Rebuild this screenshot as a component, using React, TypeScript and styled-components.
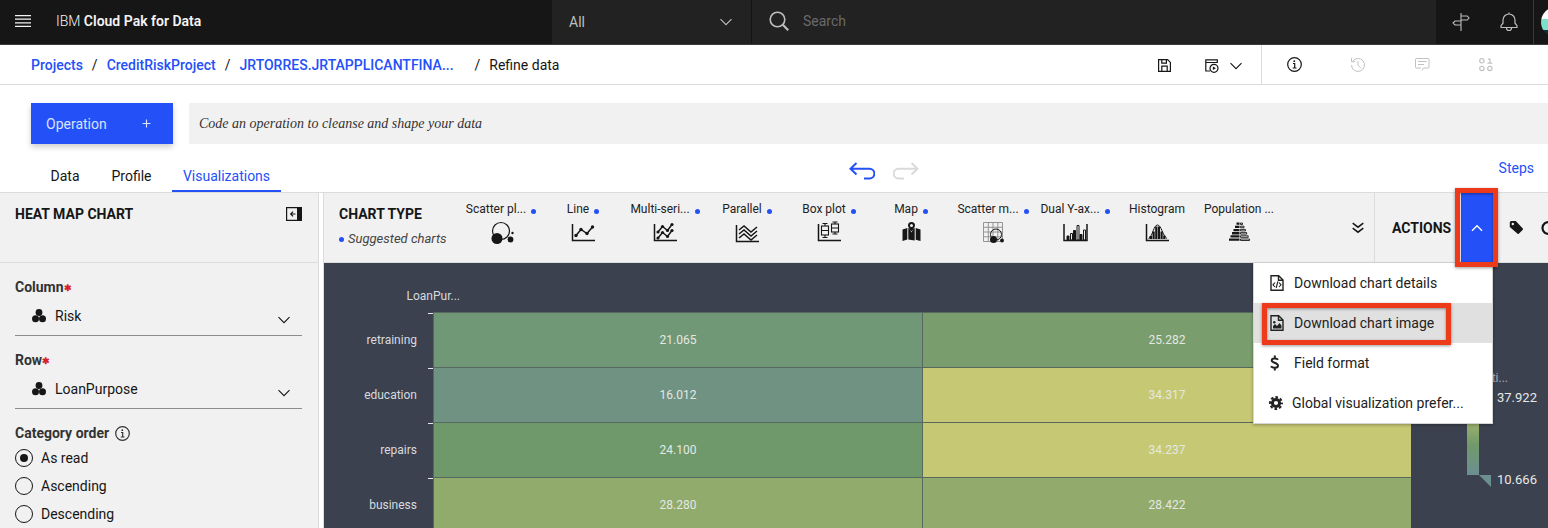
import React from "react";
import styled, { createGlobalStyle, css } from "styled-components";

const sans = `Roboto, "Liberation Sans", sans-serif`;
const serif = `"Liberation Serif", serif`;
const blue = "#2450f8";
const ink = "#161616";
const line = "#dcdcdc";
const panel = "#f1f1f1";
const red = "#ed3a1a";

const GlobalStyle = createGlobalStyle`
  *, *::before, *::after { box-sizing: border-box; }
  body { margin: 0; background: #fff; color: ${ink}; font: 14px/18px ${sans}; }
  button, input, select { font: inherit; color: inherit; margin: 0; }
  button { border: 0; padding: 0; background: none; cursor: pointer; }
`;

const Page = styled.div`
  display: flex;
  flex-direction: column;
  height: 100vh;
  overflow: hidden;
`;

const Svg = styled.svg`
  display: block;
  flex: none;
  fill: none;
  stroke: currentColor;
`;

/* ---------- top bar ---------- */

const TopBar = styled.header`
  display: flex;
  flex: none;
  height: 45px;
  background: ${ink};
  border-bottom: 1px solid #393939;
  color: #f4f4f4;
`;

const Brand = styled.div`
  display: flex;
  align-items: center;
  gap: 25px;
  width: 552px;
  padding-left: 15px;
  padding-bottom: 2px;
`;

const BrandName = styled.span`
  font-weight: 300;
  b { font-weight: 600; }
`;

const ScopeBox = styled.label`
  display: grid;
  align-items: center;
  width: 200px;
  background: #222;
  border-right: 1px solid #141414;
  color: #bebebe;
  > * { grid-area: 1 / 1; }
  > svg { justify-self: end; margin-right: 19px; pointer-events: none; }
`;

const ScopeSelect = styled.select`
  appearance: none;
  height: 100%;
  padding: 0 17px;
  border: 0;
  background: transparent;
`;

const SearchBox = styled.label`
  display: flex;
  flex: 1;
  align-items: center;
  gap: 14px;
  padding-left: 17px;
  padding-bottom: 2px;
  background: #222;
  color: #bebebe;
`;

const SearchInput = styled.input`
  flex: 1;
  border: 0;
  padding: 0;
  background: transparent;
  &::placeholder { color: #6a6a6a; opacity: 1; }
`;

const TopTools = styled.div`
  display: flex;
  width: 112px;
  padding-left: 1px;
  color: #bebebe;
`;

const TopTool = styled.button`
  display: grid;
  place-items: center;
  width: 48px;
  flex: none;
`;

const AccountButton = styled.button`
  flex: none;
  width: 15px;
  padding-left: 7px;
  overflow: hidden;
  border-left: 1px solid #393939;
`;

/* ---------- breadcrumb bar ---------- */

const CrumbBar = styled.div`
  display: flex;
  flex: none;
  justify-content: space-between;
  height: 40px;
  border-bottom: 1px solid ${line};
`;

const Crumbs = styled.nav`
  display: flex;
  align-items: center;
  gap: 9px;
  padding-left: 31px;
`;

const CrumbLink = styled.a`
  color: ${blue};
  font-weight: 500;
  text-decoration: none;
`;

const LongCrumb = styled(CrumbLink)`
  width: 226px;
`;

const CrumbTools = styled.div`
  display: flex;
`;

const SaveTools = styled.div`
  display: flex;
  align-items: center;
  padding-right: 19px;
  padding-top: 2px;
`;

const InfoTools = styled.div`
  display: flex;
  align-items: center;
  width: 287px;
  border-left: 1px solid ${line};
`;

const ToolButton = styled.button<{ $w: number; $off?: boolean }>`
  display: grid;
  place-items: center;
  width: ${(p) => p.$w}px;
  height: 37px;
  color: ${(p) => (p.$off ? "#c1c1c1" : ink)};
`;

/* ---------- operation + tabs ---------- */

const OperationBar = styled.div`
  display: flex;
  flex: none;
  gap: 16px;
  padding: 18px 0 0 31px;
`;

const OperationButton = styled.button`
  display: flex;
  align-items: center;
  justify-content: space-between;
  width: 142px;
  height: 41px;
  padding: 0 22px 0 15px;
  background: ${blue};
  color: #d9e2ff;
  box-shadow: 0 3px 6px rgba(0, 0, 0, 0.2);
`;

const CodeInput = styled.input`
  flex: 1;
  border: 0;
  padding: 0 10px;
  background: ${panel};
  font: italic 14px/18px ${serif};
  &::placeholder { color: #333; opacity: 1; }
`;

const TabBar = styled.div`
  display: grid;
  grid-template-columns: 1fr auto 1fr;
  flex: none;
  height: 49px;
  border-bottom: 1px solid ${line};
`;

const Tabs = styled.nav`
  display: flex;
  align-items: flex-end;
  padding-left: 39px;
`;

const Tab = styled.button<{ $w: number; $on?: boolean }>`
  width: ${(p) => p.$w}px;
  height: 28px;
  padding-bottom: 2px;
  border-bottom: 2px solid ${(p) => (p.$on ? blue : "transparent")};
  color: ${(p) => (p.$on ? blue : ink)};
`;

const History = styled.div`
  display: flex;
  align-items: center;
  gap: 18px;
  margin-left: 219px;
  padding-top: 5px;
`;

const HistoryButton = styled.button<{ $off?: boolean }>`
  color: ${(p) => (p.$off ? "#dadada" : blue)};
`;

const StepsLink = styled.a`
  justify-self: end;
  align-self: center;
  margin-right: 14px;
  color: ${blue};
  text-decoration: none;
`;

/* ---------- workspace ---------- */

const Workspace = styled.main`
  display: flex;
  flex: 1;
  gap: 4px;
  min-height: 0;
`;

const SidePanel = styled.aside`
  flex: none;
  width: 319px;
  overflow: hidden;
  background: ${panel};
  border-right: 1px solid ${line};
`;

const PanelTitle = styled.h2`
  margin: 0;
  font-size: 14px;
  line-height: 18px;
  font-weight: 700;
`;

const SideHead = styled.div`
  display: flex;
  align-items: flex-start;
  justify-content: space-between;
  height: 70px;
  padding: 12px 16px 0 15px;
  border-bottom: 1px solid ${line};
`;

const CollapseButton = styled.button`
  padding-top: 1px;
`;

const SideForm = styled.form`
  padding: 15px 16px 0 15px;
`;

const Field = styled.div`
  height: 73px;
`;

const FieldLabel = styled.label`
  display: block;
  color: #333;
  font-weight: 700;
  span { color: #da1e28; font-size: 9px; vertical-align: 1px; line-height: 1; }
`;

const FieldBox = styled.div`
  display: grid;
  align-items: center;
  height: 40px;
  border-bottom: 1px solid #8d8d8d;
  > * { grid-area: 1 / 1; }
  > svg { pointer-events: none; }
  > svg:first-child { margin-left: 17px; }
  > svg:last-child { justify-self: end; margin: 8px 12px 0 0; }
`;

const FieldSelect = styled.select`
  appearance: none;
  height: 100%;
  padding: 0 40px;
  border: 0;
  background: transparent;
`;

const RadioGroup = styled.fieldset`
  margin: 0;
  padding: 0;
  border: 0;
`;

const RadioLegend = styled.legend`
  display: flex;
  align-items: center;
  gap: 6px;
  padding: 0;
  color: #333;
  font-weight: 700;
`;

const RadioRow = styled.label`
  display: flex;
  align-items: center;
  gap: 8px;
  height: 28px;
`;

const RadioList = styled.div`
  padding-top: 2px;
`;

const Radio = styled.input`
  appearance: none;
  display: grid;
  place-items: center;
  width: 18px;
  height: 18px;
  border: 1px solid ${ink};
  border-radius: 50%;
  &:checked::before {
    content: "";
    width: 8px;
    height: 8px;
    border-radius: 50%;
    background: ${ink};
  }
`;

const ChartPanel = styled.section`
  display: flex;
  flex: 1;
  flex-direction: column;
  min-width: 0;
  border-left: 1px solid ${line};
  background: #3b414e;
`;

const ChartBar = styled.div`
  display: flex;
  flex: none;
  height: 70px;
  background: ${panel};
  border-bottom: 1px solid ${line};
`;

const ChartTypeHead = styled.div`
  flex: none;
  width: 136px;
  padding: 12px 0 0 15px;
`;

const Suggested = styled.p`
  display: flex;
  align-items: center;
  gap: 4px;
  margin: 7px 0 0;
  color: #444;
  font-size: 13px;
  font-style: italic;
`;

const Dot = styled.i`
  flex: none;
  width: 5px;
  height: 5px;
  border-radius: 50%;
  background: ${blue};
`;

const ChartTypes = styled.div`
  display: flex;
  flex: 1;
  min-width: 0;
  overflow: hidden;
`;

const ChartType = styled.button`
  display: flex;
  flex: none;
  flex-direction: column;
  align-items: center;
  gap: 4px;
  width: 82px;
  padding-top: 8px;
`;

const ChartTypeName = styled.span`
  display: flex;
  align-items: center;
  gap: 5px;
  color: #222;
  font-size: 12px;
  line-height: 16px;
  white-space: nowrap;
  i { margin-top: 4px; }
`;

const MoreButton = styled.button`
  display: grid;
  place-items: center;
  flex: none;
  width: 32px;
`;

const Actions = styled.div`
  display: flex;
  flex: none;
  align-items: center;
  width: 174px;
  border-left: 1px solid ${line};
`;

const ActionsTitle = styled(PanelTitle)`
  width: 85px;
  padding-left: 17px;
`;

const MenuAnchor = styled.div`
  position: relative;
  align-self: stretch;
  width: 33px;
  border-left: 1px solid #fff;
`;

const MenuToggle = styled.button`
  display: grid;
  place-items: center;
  width: 100%;
  height: 69px;
  background: ${blue};
  color: #fff;
`;

const marker = css`
  position: absolute;
  border: 5px solid ${red};
  box-shadow: 0 1px 3px rgba(0, 0, 0, 0.4), inset 0 1px 3px rgba(0, 0, 0, 0.4);
  pointer-events: none;
`;

const ToggleMarker = styled.span`
  ${marker}
  inset: -5px -5px -5px -6px;
  z-index: 3;
`;

const ItemMarker = styled.span`
  ${marker}
  inset: 0 41px -2px 8px;
  z-index: 1;
`;

const Menu = styled.ul`
  position: absolute;
  z-index: 2;
  top: 70px;
  right: 0;
  width: 240px;
  margin: 0;
  padding: 0;
  list-style: none;
  background: #fff;
  border: solid #d5d5d5;
  border-width: 0 1px 1px;
  box-shadow: 0 1px 3px rgba(0, 0, 0, 0.3);
`;

const MenuItem = styled.li<{ $on?: boolean }>`
  position: relative;
  height: 40px;
  background: ${(p) => (p.$on ? "#e0e0e0" : "#fff")};
`;

const MenuButton = styled.button`
  display: flex;
  align-items: center;
  gap: 9px;
  width: 100%;
  height: 40px;
  padding-left: 15px;
  color: #222;
  white-space: nowrap;
`;

const ActionIcons = styled.div`
  display: flex;
  flex: 1;
  gap: 17px;
  padding-left: 16px;
  overflow: hidden;
`;

/* ---------- heat map ---------- */

const HeatMap = styled.div`
  display: flex;
  flex: 1;
  min-height: 0;
  overflow: hidden;
  color: #d8dade;
  font-size: 12px;
  line-height: 16px;
`;

const Plot = styled.div`
  flex: 1;
  padding-top: 25px;
`;

const AxisName = styled.div`
  width: 136px;
  height: 24px;
  text-align: right;
`;

const HeatRow = styled.div`
  display: grid;
  grid-template-columns: 109px 1fr 1fr;
  height: 55px;
`;

const RowName = styled.div`
  display: grid;
  grid-template-columns: 1fr 5px;
  column-gap: 11px;
  align-items: center;
  text-align: right;
  &::after {
    content: "";
    align-self: start;
    height: 1px;
    margin-top: 1px;
    background: #e8e8e8;
  }
`;

const HeatCell = styled.div<{ $c: string }>`
  display: grid;
  place-items: center;
  border: solid #56685f;
  border-width: 1px 0 0 1px;
  background: ${(p) => p.$c};
  color: #e4e8e4;
`;

const ColorScale = styled.div`
  display: grid;
  grid-template-columns: 12px auto;
  align-content: start;
  flex: none;
  width: 137px;
  padding: 107px 0 0 56px;
  color: #e8e8e8;
`;

const ScaleTitle = styled.div`
  display: flex;
  justify-content: flex-end;
  grid-column: 1 / 3;
  width: 41px;
  color: #a8abb2;
`;

const ScaleBar = styled.div`
  height: 85px;
  margin-top: 4px;
  background: linear-gradient(#c6c873 0%, #c6c873 20%, #91ab6c 45%, #70996b 65%, #6c8f92 100%);
`;

const ScaleEnds = styled.div`
  display: flex;
  flex-direction: column;
  justify-content: space-between;
  height: 98px;
  padding-left: 18px;
  margin-top: 4px;
  font-size: 13px;
`;

const ScaleHandle = styled(Svg)`
  margin: -13px 0 0 12px;
`;

/* ---------- drawings ---------- */

const Icon = ({ w, h = w, box, sw = 1, children }: { w: number; h?: number; box?: string; sw?: number; children: React.ReactNode }) => (
  <Svg width={w} height={h} viewBox={box || `0 0 ${w} ${h}`} strokeWidth={sw} aria-hidden="true">{children}</Svg>
);

const Chevron = ({ up }: { up?: boolean }) => (
  <Icon w={12} h={8} sw={up ? 1.4 : 1.1}><path d={up ? "M1 6.7 6 1.7l5 5" : "M.5 1.2 6 6.7l5.500-5.500"} /></Icon>
);

const InfoIcon = () => (
  <Icon w={15} sw={1.2}><circle cx="7.500" cy="7.500" r="6.800" /><path d="M6 6.500h1.700V11M5.700 11h3.800" /><circle cx="7.300" cy="4.200" r=".9" fill="currentColor" stroke="none" /></Icon>
);

const Clusters = () => (
  <Icon w={14}><g fill="currentColor" stroke="none"><circle cx="7" cy="3.500" r="3.400" /><circle cx="3.500" cy="9.800" r="3.500" /><circle cx="10.500" cy="9.800" r="3.500" /></g></Icon>
);

const typeArt: Record<string, React.ReactNode> = {
  scatter: <><circle cx="12" cy="10" r="8.500" strokeWidth="1.200" /><circle cx="8" cy="17.500" r="5.500" fill="currentColor" stroke="none" /><circle cx="21.500" cy="18.500" r="2.900" fill="currentColor" stroke="none" /><circle cx="23.500" cy="12" r="1.200" fill="currentColor" stroke="none" /></>,
  line: <><path d="M1.500 3v16.500H24" /><path d="m5 14.500 5-6 6 4L21.500 6" /><g fill="currentColor" stroke="none"><circle cx="5" cy="14.500" r="1.700" /><circle cx="10" cy="8.500" r="1.700" /><circle cx="16" cy="12.500" r="1.700" /><circle cx="21.500" cy="6" r="1.700" /></g></>,
  multi: <><path d="M1.500 3v16.500H24" /><path d="m5 11 4.500-5.500 5 4 4.500-6M5 17l4.500-5.500 5 4 4.500-6" /><g fill="currentColor" stroke="none">{[[5, 11], [9.5, 5.5], [14.5, 9.5], [19, 3.500], [5, 17], [9.5, 11.5], [14.5, 15.5], [19, 9.5]].map(([x, y]) => <circle key={`${x}-${y}`} cx={x} cy={y} r="1.600" />)}</g></>,
  parallel: <><path d="M1.500 4v16.500H24" /><path d="m4 9 5-4 7 6 6-5M4 13l5-4 7 6 6-5M4 17l5-4 7 6 6-5" /></>,
  box: <><path d="M1.500 3v16.500H24" /><g strokeWidth="1.100"><path d="M5.500 2.500h5M8 2.500V5m0 9v2.500m-2.500 0h5M15.500 1h5M18 1v2m0 8v2m-2.500 0h5M4.500 9.500h7M14.500 7h7" /><rect x="4.500" y="5" width="7" height="9" /><rect x="14.500" y="3" width="7" height="8" /></g></>,
  map: <g fill="currentColor" stroke="none"><path d="M3.500 8.500 8.300 7v11.500l-4.800 1.500zM9.300 7l1.200.5 2 4 2-4 1.200-.5v12.500l-6.400-1zM16.700 7l4.800 1.500V20l-4.800-1.300z" /><path fillRule="evenodd" d="M12.500 1A3.500 3.500 0 0 1 16 4.500c0 2-3.500 6-3.500 6S9 6.500 9 4.500A3.500 3.500 0 0 1 12.500 1zm0 2a1.500 1.500 0 1 0 0 3 1.500 1.500 0 0 0 0-3z" /></g>,
  matrix: <><path stroke="#8a8a8a" strokeWidth=".9" d="M2.500 1.500h19v19h-19zM7.300 1.500v19M12 1.500v19M16.800 1.500v19M2.500 6.300h19M2.500 11h19M2.500 15.800h19" /><circle cx="15" cy="13.500" r="5.500" strokeWidth="1" /><g fill="currentColor" stroke="none"><circle cx="12.500" cy="18.500" r="3.500" /><circle cx="21" cy="19.500" r="1.900" /></g></>,
  dual: <><path d="M1 3v16.500h23V3" /><g strokeWidth="1"><path fill="currentColor" d="M4 15h2v4H4zM10.500 9.500h2v9.500h-2zM17 13.500h2V19h-2z" /><path d="M7.500 12.500h2V19h-2zM14 4.500h2V19h-2zM20.500 9h2v10h-2z" /></g></>,
  histogram: <><path d="M1.500 3v16.500H24" /><path strokeWidth="1" d="M3.500 17.500C8 15 8.500 4 12.500 4s5 11 9.500 13.500" /><path fill="currentColor" stroke="none" d="M4.500 15H7v3H4.500zM7.500 10.500h2.200V18H7.500zM10.200 5.500h2.200V18h-2.200zM12.900 5.500H15V18h-2.100zM15.500 10.500h2.200V18h-2.200zM18.200 14.500h2.200V18h-2.200z" /></>,
  pyramid: <><path fill="currentColor" stroke="none" d="M9.500 1.500h3v2.300h-3zM8 4.700h4.500V7H8zM6.500 7.900h6v2.300h-6zM5 11.100h7.500v2.300H5zM3.500 14.300h9v2.300h-9zM2 17.500h10.500v2.300H2z" /><path strokeWidth=".9" d="M13.500 2h2v1.500h-2zM13.500 5.200H17v1.500h-3.500zM13.500 8.400h5v1.500h-5zM13.500 11.600h6.200v1.500h-6.200zM13.500 14.800h7.700v1.500h-7.700zM13.500 18h9v1.500h-9z" /></>,
};

const chartTypes: [string, string, boolean][] = [
  ["Scatter pl...", "scatter", true],
  ["Line", "line", true],
  ["Multi-seri...", "multi", true],
  ["Parallel", "parallel", true],
  ["Box plot", "box", true],
  ["Map", "map", true],
  ["Scatter m...", "matrix", true],
  ["Dual Y-ax...", "dual", true],
  ["Histogram", "histogram", false],
  ["Population ...", "pyramid", false],
];

const heatRows: [string, [string, string][]][] = [
  ["retraining", [["21.065", "#719876"], ["25.282", "#799d6c"]]],
  ["education", [["16.012", "#6f9283"], ["34.317", "#c6c873"]]],
  ["repairs", [["24.100", "#70996b"], ["34.237", "#c6c873"]]],
  ["business", [["28.280", "#91ab6c"], ["28.422", "#92ab6c"]]],
];

const filePath = "M1 .8h7.700L13 5v10.200H1zM8.500 1v4.200H13";

const menuItems: { name: string; icon: React.ReactNode; on?: boolean }[] = [
  { name: "Download chart details", icon: <Icon w={16} box="-1 0 16 16" sw={1.4}><path d={filePath} /><path strokeWidth="1.100" d="M5 7.500 3 9.800 5 12M9 7.500l2 2.300L9 12M7.800 6.500 6.200 13" /></Icon> },
  { name: "Download chart image", on: true, icon: <Icon w={16} box="-1 0 16 16" sw={1.4}><path d={filePath} /><path fill="currentColor" stroke="none" d="M3 13.500V11l2-2 2 2 2.500-3 2 2.500v3z" /><circle cx="4.300" cy="7.300" r="1.200" fill="currentColor" stroke="none" /></Icon> },
  { name: "Field format", icon: <Icon w={16} sw={2}><path d="M9 4.700C8 3.200 2.700 3 2.700 5.500S9 7.500 9 10.600 3.300 13.300 2 11.300M5.800.5v2.700M5.800 12.800v2.700" /></Icon> },
  { name: "Global visualization prefer...", icon: <Icon w={14} sw={3}><circle cx="7" cy="7" r="3.600" /><circle cx="7" cy="7" r="5.900" strokeWidth="2.200" strokeDasharray="2.600 2.034" strokeDashoffset="1.300" /></Icon> },
];

const Person = () => (
  <Svg width="30" height="30" viewBox="0 0 30 30">
    <clipPath id="avatar"><circle cx="15" cy="15" r="15" /></clipPath>
    <g clipPath="url(#avatar)" stroke="none"><path fill="#fff" d="M0 0h30v12H0z" /><path fill="#7de0cc" d="M0 12h30v11H0z" /><path fill="#12303c" d="M0 23h30v7H0z" /></g>
  </Svg>
);

export default function App() {
  return (
    <Page>
      <GlobalStyle />
      <TopBar>
        <Brand>
          <button aria-label="Menu"><Icon w={16} h={12} sw={1.2}><path d="M0 .6h16M0 4.200h16M0 7.800h16M0 11.400h16" /></Icon></button>
          <BrandName>IBM <b>Cloud Pak for Data</b></BrandName>
        </Brand>
        <ScopeBox>
          <ScopeSelect aria-label="Search scope"><option>All</option></ScopeSelect>
          <Chevron />
        </ScopeBox>
        <SearchBox>
          <Icon w={20} sw={1.6}><circle cx="8.500" cy="8.500" r="7.300" /><path strokeWidth="2.200" d="m13.800 13.800 5.400 5.400" /></Icon>
          <SearchInput placeholder="Search" aria-label="Search" />
        </SearchBox>
        <TopTools>
          <TopTool aria-label="Guided tour">
            <Icon w={18} sw={1.1}><path d="M9 0v18M9 3h6.200L17 5l-1.800 2H9zM9 8H3L1 10l2 2h6z" /></Icon>
          </TopTool>
          <TopTool aria-label="Notifications">
            <Icon w={18} h={20} sw={1.2}><path d="M9 .5V2M1 15.500h16v-1.800l-2-2.500V8A6 6 0 0 0 3 8v3.200l-2 2.500zM6.500 16a2.500 2.500 0 0 0 5 0" /></Icon>
          </TopTool>
          <AccountButton aria-label="Account"><Person /></AccountButton>
        </TopTools>
      </TopBar>

      <CrumbBar>
        <Crumbs aria-label="Breadcrumb">
          <CrumbLink href="#projects">Projects</CrumbLink>
          <span>/</span>
          <CrumbLink href="#project">CreditRiskProject</CrumbLink>
          <span>/</span>
          <LongCrumb href="#asset">JRTORRES.JRTAPPLICANTFINA...</LongCrumb>
          <span>/</span>
          <span>Refine data</span>
        </Crumbs>
        <CrumbTools>
          <SaveTools>
            <ToolButton $w={60} aria-label="Save">
              <Icon w={13} sw={1.2}><path d="M.6.600h9l2.800 2.800v9H.6zM3.800.6v3.500h4.600V.600M3.800 12.400V7.200h5.400v5.200" /></Icon>
            </ToolButton>
            <ToolButton $w={36} aria-label="Save and run">
              <Icon w={14} sw={1.200}><path d="M5 12H.8V.800h11.500V4M.8 3.500h11.500" /><circle cx="9" cy="9.300" r="4" /><path fill="currentColor" stroke="none" d="m7.900 7.500 3 1.800-3 1.800z" /></Icon>
            </ToolButton>
            <ToolButton $w={12} aria-label="More save options"><Chevron /></ToolButton>
          </SaveTools>
          <InfoTools>
            <ToolButton $w={64} aria-label="Information"><InfoIcon /></ToolButton>
            <ToolButton $w={64} $off disabled aria-label="History">
              <Icon w={16}><path d="M2.500 4.500A6.500 6.500 0 1 1 1.500 8M1.500 1v3.700h3.800M8 4v4.300l3 3" /></Icon>
            </ToolButton>
            <ToolButton $w={64} $off disabled aria-label="Comments">
              <Icon w={15} h={14}><path d="M7 12.500 8.500 10H13a1 1 0 0 0 1-1V1.500a1 1 0 0 0-1-1H1.500a1 1 0 0 0-1 1V9a1 1 0 0 0 1 1H6M3 3.500h8.500M3 6.500h6" /></Icon>
            </ToolButton>
            <ToolButton $w={64} $off disabled aria-label="Data">
              <Icon w={14} sw={1.200}><rect x=".7" y=".7" width="4.300" height="4.300" rx="2" /><rect x=".7" y="8.300" width="4.300" height="4.300" rx="2" /><rect x="8.700" y="8.300" width="4.300" height="4.300" rx="2" /><path d="M9 1.200h2V5M8.500 5.200h4.800" /></Icon>
            </ToolButton>
          </InfoTools>
        </CrumbTools>
      </CrumbBar>

      <OperationBar>
        <OperationButton>Operation <Icon w={9} sw={1.200}><path d="M4.500.5v8M.5 4.500h8" /></Icon></OperationButton>
        <CodeInput placeholder="Code an operation to cleanse and shape your data" aria-label="Code an operation" />
      </OperationBar>

      <TabBar>
        <Tabs>
          <Tab $w={52}>Data</Tab>
          <Tab $w={81}>Profile</Tab>
          <Tab $w={109} $on>Visualizations</Tab>
        </Tabs>
        <History>
          <HistoryButton aria-label="Undo"><Icon w={26} h={18} sw={2}><path d="M7.500 1 1.500 6.700l6 5.800M1.500 6.700h19a4.700 4.700 0 0 1 0 9.800H15" /></Icon></HistoryButton>
          <HistoryButton $off disabled aria-label="Redo"><Icon w={26} h={18} sw={2}><path d="m18.500 1 6 5.700-6 5.800M24.500 6.700h-19a4.700 4.700 0 0 0 0 9.800H11" /></Icon></HistoryButton>
        </History>
        <StepsLink href="#steps">Steps</StepsLink>
      </TabBar>

      <Workspace>
        <SidePanel>
          <SideHead>
            <PanelTitle>HEAT MAP CHART</PanelTitle>
            <CollapseButton aria-label="Collapse panel">
              <Icon w={16} h={16} sw={1.200}><path d="M.6 1.600h14.800v12.800H.6zM9.500 8H5M7 5.700 4.700 8 7 10.300" /><path fill="currentColor" stroke="none" d="M11 1h5v14h-5z" /></Icon>
            </CollapseButton>
          </SideHead>
          <SideForm>
            <Field>
              <FieldLabel htmlFor="column">Column<span>✱</span></FieldLabel>
              <FieldBox><Clusters /><FieldSelect id="column"><option>Risk</option></FieldSelect><Chevron /></FieldBox>
            </Field>
            <Field>
              <FieldLabel htmlFor="row">Row<span>✱</span></FieldLabel>
              <FieldBox><Clusters /><FieldSelect id="row"><option>LoanPurpose</option></FieldSelect><Chevron /></FieldBox>
            </Field>
            <RadioGroup>
              <RadioLegend>Category order <InfoIcon /></RadioLegend>
              <RadioList>
                {["As read", "Ascending", "Descending"].map((name, i) => (
                  <RadioRow key={name}><Radio type="radio" name="order" defaultChecked={i === 0} />{name}</RadioRow>
                ))}
              </RadioList>
            </RadioGroup>
          </SideForm>
        </SidePanel>

        <ChartPanel>
          <ChartBar>
            <ChartTypeHead>
              <PanelTitle>CHART TYPE</PanelTitle>
              <Suggested><Dot />Suggested charts</Suggested>
            </ChartTypeHead>
            <ChartTypes>
              {chartTypes.map(([name, art, suggested]) => (
                <ChartType key={name}>
                  <ChartTypeName>{name}{suggested && <Dot />}</ChartTypeName>
                  <Icon w={25} h={24} sw={1.500}>{typeArt[art]}</Icon>
                </ChartType>
              ))}
            </ChartTypes>
            <MoreButton aria-label="More chart types"><Icon w={12} sw={1.500}><path d="m.7 1.200 5.300 4 5.300-4M.7 6.200l5.300 4 5.300-4" /></Icon></MoreButton>
            <Actions>
              <ActionsTitle>ACTIONS</ActionsTitle>
              <MenuAnchor>
                <MenuToggle aria-label="Actions menu" aria-expanded="true"><Chevron up /></MenuToggle>
                <ToggleMarker />
                <Menu>
                  {menuItems.map((item) => (
                    <MenuItem key={item.name} $on={item.on}>
                      <MenuButton>{item.icon}{item.name}</MenuButton>
                      {item.on && <ItemMarker />}
                    </MenuItem>
                  ))}
                </Menu>
              </MenuAnchor>
              <ActionIcons>
                <button aria-label="Labels"><Icon w={15} h={16}><path fill="currentColor" stroke="none" fillRule="evenodd" d="M.8 2.500A1.500 1.500 0 0 1 2.300 1h4.500l7 7.500a1 1 0 0 1 0 1.200l-4 4a1 1 0 0 1-1.200 0L.8 7zM3.800 2.800a1.200 1.200 0 1 0 0 2.400 1.200 1.200 0 0 0 0-2.400z" /></Icon></button>
                <button aria-label="Reset"><Icon w={14} sw={2.200}><path d="M12.500 4.500a5.800 5.800 0 1 0 0 5" /></Icon></button>
              </ActionIcons>
            </Actions>
          </ChartBar>

          <HeatMap>
            <Plot>
              <AxisName>LoanPur...</AxisName>
              {heatRows.map(([name, cells]) => (
                <HeatRow key={name}>
                  <RowName>{name}</RowName>
                  {cells.map(([value, color]) => <HeatCell key={value} $c={color}>{value}</HeatCell>)}
                </HeatRow>
              ))}
            </Plot>
            <ColorScale>
              <ScaleTitle>Predicti...</ScaleTitle>
              <ScaleBar />
              <ScaleEnds><span>37.922</span><span>10.666</span></ScaleEnds>
              <ScaleHandle width="12" height="12" viewBox="0 0 12 12"><path fill="#6c8f92" stroke="none" d="M0 0h12v12z" /></ScaleHandle>
            </ColorScale>
          </HeatMap>
        </ChartPanel>
      </Workspace>
    </Page>
  );
}
